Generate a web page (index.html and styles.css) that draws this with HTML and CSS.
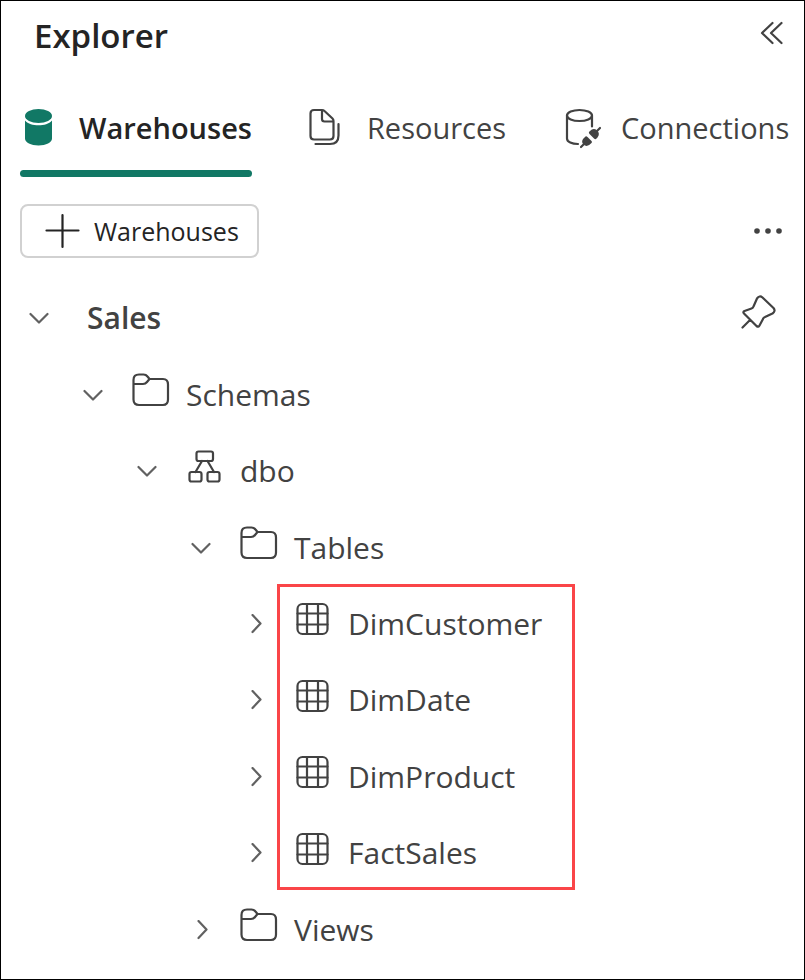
FILE: index.html
```html
<!DOCTYPE html>
<html lang="en">
<head>
<meta charset="utf-8">
<meta name="viewport" content="width=device-width, initial-scale=1">
<title>Explorer</title>
<link rel="stylesheet" href="styles.css">
</head>
<body>
<svg class="defs" aria-hidden="true">
  <symbol id="down" viewBox="0 0 20 20"><path d="M1.500 6 10 14.500 18.500 6"/></symbol>
  <symbol id="right" viewBox="0 0 20 20"><path d="M7.500 1 15.500 9.500 7.500 18"/></symbol>
  <symbol id="folder" viewBox="0 0 38 34"><path d="M1.500 11.500V7Q1.500 1.500 7 1.500H11.500Q14 1.500 15.500 3.500L17.500 6H31Q36 6 36 11.500V26.500Q36 32 31 32H7Q1.500 32 1.500 26.500ZM1.500 11H11Q13.500 11 15 9L17.500 6"/></symbol>
  <symbol id="schema" viewBox="0 0 38 34"><rect x="10.500" y="1.500" width="16.500" height="9.500" rx="2"/><rect x="3.500" y="22" width="12" height="9.500" rx="2"/><rect x="21.500" y="22" width="12" height="9.500" rx="2"/><path d="M16 11 9.500 22M21.500 11 28 22"/></symbol>
  <symbol id="table" viewBox="0 0 38 34"><rect x="3.500" y="2" width="30" height="30" rx="5"/><path d="M13 2V32M24 2V32M3.500 11.500H33.500M3.500 22.500H33.500"/></symbol>
</svg>
<main class="panel">
  <header class="header">
    <h1>Explorer</h1>
    <button class="icon-button" aria-label="Collapse">
      <svg width="24" height="24" viewBox="0 0 24 24"><path d="M12.500 2 2 12 12.500 22M21.500 2 11 12 21.500 22"/></svg>
    </button>
  </header>

  <nav class="tabs" role="tablist" aria-label="Explorer sections">
    <button class="tab selected" role="tab" aria-selected="true">
      <svg width="36" height="40" viewBox="0 0 36 40"><g class="solid"><ellipse cx="18.500" cy="8" rx="13.500" ry="7"/><path d="M5 12.500C8 16 13 17.300 18.500 17.300S29 16 32 12.500V30.500C32 34.500 26 37.500 18.500 37.500S5 34.500 5 30.500Z"/></g></svg>
      Warehouses
    </button>
    <button class="tab" role="tab" aria-selected="false">
      <svg width="36" height="40" viewBox="0 0 36 40"><path d="M6 2H14Q15.500 2 16.500 3L24.500 10.500Q25.500 11.500 25.500 13V28Q25.500 31.500 22 31.500H6Q2.500 31.500 2.500 28V5.500Q2.500 2 6 2ZM14 2V11Q14 13.500 16.500 13.500H25.500M30.500 16V27.500Q30.500 36 22 36H7.500"/></svg>
      Resources
    </button>
    <button class="tab" role="tab" aria-selected="false">
      <svg width="36" height="40" viewBox="0 0 36 40"><ellipse cx="17.500" cy="7.500" rx="12.500" ry="5.500"/><path d="M5 7.500V30.500C5 34 10 36 16 36M30 7.500V18.500M38 20 34.500 23.500M19 39 22.500 35.500"/><g class="solid"><path d="M28 23Q31.500 19.500 35 22.500T35.500 29.500L34 31Q33 31.500 32 30.500L27.500 26Q26.500 25 27 24Z"/><path d="M23.500 28.500Q24.500 28 25.500 29L29.500 33Q30.500 34 29.500 35Q25 40 21.500 36.500T23.500 28.500Z"/></g></svg>
      Connections
    </button>
  </nav>

  <div class="toolbar">
    <button class="add">
      <svg width="34" height="34" viewBox="0 0 34 34"><path d="M16.500 1V33M0.500 16.500H32.500"/></svg>
      Warehouses
    </button>
    <button class="icon-button" aria-label="More options">
      <svg width="30" height="8" viewBox="0 0 30 8"><g class="solid"><circle cx="4" cy="4" r="2.800"/><circle cx="15" cy="4" r="2.800"/><circle cx="26" cy="4" r="2.800"/></g></svg>
    </button>
  </div>

  <div class="tree" role="tree" aria-label="Warehouse objects">
    <div class="row root" role="treeitem" aria-level="1" aria-expanded="true">
      <svg class="chevron"><use href="#down"/></svg><span>Sales</span>
      <button class="icon-button pin" aria-label="Pin">
        <svg width="36" height="36" viewBox="0 0 36 36"><path d="M2.500 33.500 10 26M17 4.500Q19.500 1 22.500 3.500L33.500 14Q36 17 32.500 19.500L25 23Q23.500 23.500 23 25L19.500 31.500Q18.500 33.500 16.500 32L4 19.500Q2.500 18 4.500 17L11.500 14.500Q13 14 13.500 12.500Z"/></svg>
      </button>
    </div>
    <div class="row level-1" role="treeitem" aria-level="2" aria-expanded="true">
      <svg class="chevron"><use href="#down"/></svg><svg class="kind"><use href="#folder"/></svg><span>Schemas</span>
    </div>
    <div class="row level-2" role="treeitem" aria-level="3" aria-expanded="true">
      <svg class="chevron"><use href="#down"/></svg><svg class="kind"><use href="#schema"/></svg><span>dbo</span>
    </div>
    <div class="row level-3" role="treeitem" aria-level="4" aria-expanded="true">
      <svg class="chevron"><use href="#down"/></svg><svg class="kind"><use href="#folder"/></svg><span>Tables</span>
    </div>
    <div class="group" role="group">
      <div class="row level-4" role="treeitem" aria-level="5" aria-expanded="false">
        <svg class="chevron"><use href="#right"/></svg><svg class="kind"><use href="#table"/></svg><span>DimCustomer</span>
      </div>
      <div class="row level-4" role="treeitem" aria-level="5" aria-expanded="false">
        <svg class="chevron"><use href="#right"/></svg><svg class="kind"><use href="#table"/></svg><span>DimDate</span>
      </div>
      <div class="row level-4" role="treeitem" aria-level="5" aria-expanded="false">
        <svg class="chevron"><use href="#right"/></svg><svg class="kind"><use href="#table"/></svg><span>DimProduct</span>
      </div>
      <div class="row level-4" role="treeitem" aria-level="5" aria-expanded="false">
        <svg class="chevron"><use href="#right"/></svg><svg class="kind"><use href="#table"/></svg><span>FactSales</span>
      </div>
      <div class="highlight"></div>
    </div>
    <div class="row level-3" role="treeitem" aria-level="4" aria-expanded="false">
      <svg class="chevron"><use href="#right"/></svg><svg class="kind"><use href="#folder"/></svg><span>Views</span>
    </div>
  </div>
</main>
</body>
</html>
```
FILE: styles.css
```css
* {
  box-sizing: border-box;
}

body {
  margin: 0;
  background: #fff;
  color: #424242;
  font: 30px/40px "Open Sans", "Noto Sans", sans-serif;
}

button {
  display: flex;
  align-items: center;
  padding: 0;
  border: 0;
  background: none;
  color: inherit;
  font: inherit;
  white-space: nowrap;
}

svg {
  flex: none;
  overflow: visible;
  fill: none;
  stroke: currentColor;
  stroke-width: 2.2;
  stroke-linecap: round;
  stroke-linejoin: round;
}

.solid {
  fill: currentColor;
  stroke: none;
}

.defs {
  position: absolute;
  width: 0;
  height: 0;
}

.panel {
  display: flex;
  flex-direction: column;
  min-height: 100vh;
  padding-bottom: 11px;
  border: 1px solid #000;
}

.header {
  display: flex;
  align-items: flex-start;
  justify-content: space-between;
  height: 79px;
  padding: 12px 20px 0 33px;
}

h1 {
  margin: 0;
  color: #242424;
  font-size: 33px;
  font-weight: 600;
  line-height: 46px;
}

.header .icon-button {
  height: 40px;
}

.tabs {
  display: flex;
  gap: 56px;
  padding: 0 8px 0 19px;
}

.tab {
  gap: 23px;
  height: 97px;
  padding-top: 6px;
  border-bottom: 7px solid transparent;
  font-size: 29px;
}

.selected {
  position: relative;
  color: #242424;
  font-weight: 600;
}

.selected svg {
  color: #117865;
}

.selected::after {
  content: "";
  position: absolute;
  right: 0;
  bottom: -7px;
  left: 0;
  height: 7px;
  border-radius: 4px;
  background: #117865;
}

.toolbar {
  display: flex;
  align-items: center;
  justify-content: space-between;
  margin: 27px 21px 22px 19px;
}

.add {
  gap: 14px;
  height: 54px;
  padding: 0 18px 0 24px;
  border: 2px solid #d1d1d1;
  border-radius: 8px;
  color: #242424;
  font-size: 25px;
}

.tree {
  display: grid;
  flex: 1;
  grid-template-rows: repeat(9, minmax(60px, 1fr));
}

.group {
  position: relative;
  display: grid;
  grid-row: span 4;
  grid-template-rows: subgrid;
}

.row {
  display: flex;
  align-items: center;
  padding: 0 28px;
}

.root {
  font-weight: 600;
}

.root span {
  margin-left: 38px;
}

.level-1 {
  padding-left: 82px;
}

.level-2 {
  padding-left: 136px;
}

.level-3 {
  padding-left: 190px;
}

.level-4 {
  padding-left: 244px;
}

.chevron {
  width: 20px;
  height: 20px;
  color: #616161;
}

.kind {
  width: 38px;
  height: 34px;
  margin: 0 16px 9px 29px;
}

.pin {
  margin: 0 0 12px auto;
}

.highlight {
  position: absolute;
  top: -2px;
  bottom: 2px;
  left: 276px;
  width: 298px;
  border: 3px solid #fa4548;
  pointer-events: none;
}
```
